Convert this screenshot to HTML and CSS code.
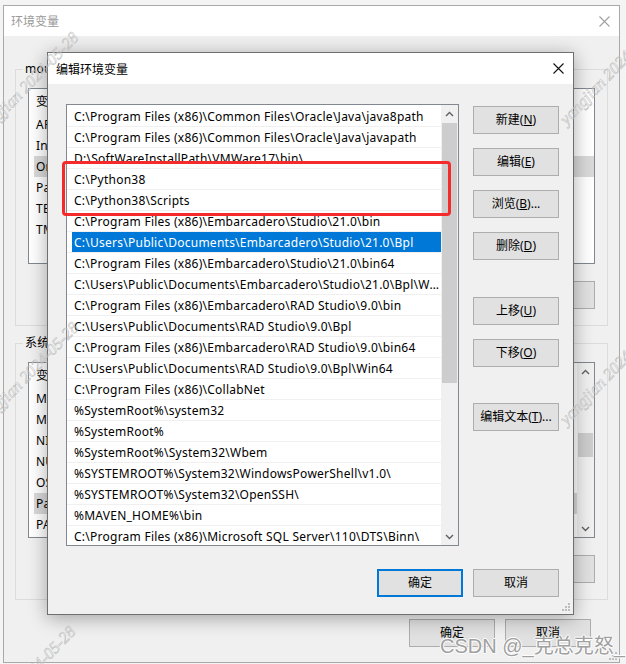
FILE: index.html
```html
<!DOCTYPE html>
<html lang="zh-CN">
<head>
<meta charset="utf-8">
<title>编辑环境变量</title>
<link rel="stylesheet" href="styles.css">
</head>
<body>
<div class="screen">
  <div class="envwin">
    <div class="win-title">
      <span class="win-title-text">环境变量</span>
      <svg class="close-icon close-grey" width="11" height="11" viewBox="0 0 11 11"><path d="M0.5 0.5 L10.5 10.5 M10.5 0.5 L0.5 10.5" /></svg>
    </div>
    <div class="win-body">
      <fieldset class="group">
        <legend>mou 的用户变量(U)</legend>
        <div class="vlist">
          <div class="vlist-rows">
            <div class="vhead"><span class="vcol-name">变量</span><span class="vcol-val">值</span></div>
            <div class="vrow">APPDATA_HOME</div>
            <div class="vrow">IntelliJ IDEA</div>
            <div class="vrow vrow-sel">OneDrive</div>
            <div class="vrow">Path</div>
            <div class="vrow">TEMP</div>
            <div class="vrow">TMP</div>
          </div>
        </div>
        <div class="group-btns">
          <button class="btn">新建(<u>N</u>)...</button>
          <button class="btn">编辑(<u>E</u>)...</button>
          <button class="btn">删除(<u>D</u>)</button>
        </div>
      </fieldset>
      <fieldset class="group group-second">
        <legend>系统变量(<u>S</u>)</legend>
        <div class="vlist">
          <div class="vlist-rows">
            <div class="vhead"><span class="vcol-name">变量</span><span class="vcol-val">值</span></div>
            <div class="vrow">MAVEN_HOME</div>
            <div class="vrow">MOZ_PLUGIN_PATH</div>
            <div class="vrow">NIDAQmxSwitchDir</div>
            <div class="vrow">NUMBER_OF_PROCESSORS</div>
            <div class="vrow">OS</div>
            <div class="vrow vrow-sel">Path</div>
            <div class="vrow">PATHEXT</div>
          </div>
          <div class="sbar">
            <div class="sbar-arrow"><svg width="9" height="6" viewBox="0 0 9 6"><path d="M1 5 L4.5 1.5 L8 5"/></svg></div>
            <div class="sbar-track"><div class="sbar-thumb bg-thumb"></div></div>
            <div class="sbar-arrow"><svg width="9" height="6" viewBox="0 0 9 6"><path d="M1 1 L4.5 4.5 L8 1"/></svg></div>
          </div>
        </div>
        <div class="group-btns">
          <button class="btn">新建(<u>W</u>)...</button>
          <button class="btn">编辑(<u>I</u>)...</button>
          <button class="btn">删除(<u>L</u>)</button>
        </div>
      </fieldset>
      <div class="win-footer">
        <button class="btn">确定</button>
        <button class="btn">取消</button>
      </div>
    </div>
    <svg class="grip grip-win" width="8" height="8" viewBox="0 0 8 8"><rect x="6" y="0" width="2" height="2"/><rect x="3" y="3" width="2" height="2"/><rect x="6" y="3" width="2" height="2"/><rect x="0" y="6" width="2" height="2"/><rect x="3" y="6" width="2" height="2"/><rect x="6" y="6" width="2" height="2"/></svg>
  </div>

  <div class="dialog">
    <div class="dlg-title">
      <span>编辑环境变量</span>
      <svg class="close-icon" width="11" height="11" viewBox="0 0 11 11"><path d="M0.5 0.5 L10.5 10.5 M10.5 0.5 L0.5 10.5" /></svg>
    </div>
    <div class="dlg-body">
      <div class="plist">
        <div class="plist-rows">
          <div class="prow">C:\Program Files (x86)\Common Files\Oracle\Java\java8path</div>
          <div class="prow">C:\Program Files (x86)\Common Files\Oracle\Java\javapath</div>
          <div class="prow">D:\SoftWareInstallPath\VMWare17\bin\</div>
          <div class="prow">C:\Python38</div>
          <div class="prow">C:\Python38\Scripts</div>
          <div class="prow">C:\Program Files (x86)\Embarcadero\Studio\21.0\bin</div>
          <div class="prow prow-sel">C:\Users\Public\Documents\Embarcadero\Studio\21.0\Bpl</div>
          <div class="prow">C:\Program Files (x86)\Embarcadero\Studio\21.0\bin64</div>
          <div class="prow">C:\Users\Public\Documents\Embarcadero\Studio\21.0\Bpl\Win64</div>
          <div class="prow">C:\Program Files (x86)\Embarcadero\RAD Studio\9.0\bin</div>
          <div class="prow">C:\Users\Public\Documents\RAD Studio\9.0\Bpl</div>
          <div class="prow">C:\Program Files (x86)\Embarcadero\RAD Studio\9.0\bin64</div>
          <div class="prow">C:\Users\Public\Documents\RAD Studio\9.0\Bpl\Win64</div>
          <div class="prow">C:\Program Files (x86)\CollabNet</div>
          <div class="prow">%SystemRoot%\system32</div>
          <div class="prow">%SystemRoot%</div>
          <div class="prow">%SystemRoot%\System32\Wbem</div>
          <div class="prow">%SYSTEMROOT%\System32\WindowsPowerShell\v1.0\</div>
          <div class="prow">%SYSTEMROOT%\System32\OpenSSH\</div>
          <div class="prow">%MAVEN_HOME%\bin</div>
          <div class="prow">C:\Program Files (x86)\Microsoft SQL Server\110\DTS\Binn\</div>
        </div>
        <div class="sbar">
          <div class="sbar-arrow"><svg width="9" height="6" viewBox="0 0 9 6"><path d="M1 5 L4.5 1.5 L8 5"/></svg></div>
          <div class="sbar-track"><div class="sbar-thumb dlg-thumb"></div></div>
          <div class="sbar-arrow"><svg width="9" height="6" viewBox="0 0 9 6"><path d="M1 1 L4.5 4.5 L8 1"/></svg></div>
        </div>
      </div>
      <div class="dlg-side">
        <button class="btn">新建(<u>N</u>)</button>
        <button class="btn">编辑(<u>E</u>)</button>
        <button class="btn">浏览(<u>B</u>)...</button>
        <button class="btn">删除(<u>D</u>)</button>
        <button class="btn btn-gap-a">上移(<u>U</u>)</button>
        <button class="btn">下移(<u>O</u>)</button>
        <button class="btn btn-gap-b">编辑文本(<u>T</u>)...</button>
      </div>
      <div class="dlg-footer">
        <button class="btn btn-default">确定</button>
        <button class="btn">取消</button>
      </div>
    </div>
    <svg class="grip grip-dlg" width="8" height="8" viewBox="0 0 8 8"><rect x="6" y="0" width="2" height="2"/><rect x="3" y="3" width="2" height="2"/><rect x="6" y="3" width="2" height="2"/><rect x="0" y="6" width="2" height="2"/><rect x="3" y="6" width="2" height="2"/><rect x="6" y="6" width="2" height="2"/></svg>
  </div>

  <div class="highlight-box"></div>

  <div class="wm wm-end wm-1">yangjian 2024-05-28</div>
  <div class="wm wm-start wm-2">yangjian 2024-05-28</div>
  <div class="wm wm-start wm-3">yangjian 2024-05-28</div>
  <div class="wm wm-end wm-4">yangjian 2024-05-28</div>
  <div class="wm wm-end wm-5">yangjian 2024-05-28</div>

  <div class="csdn-mark">CSDN @_克总克怒_</div>
</div>
</body>
</html>
```

FILE: styles.css
```css
* { box-sizing: border-box; }

body {
  margin: 0;
  background: #f4f4f4;
  font-family: "Noto Sans", "Noto Sans CJK SC", sans-serif;
  font-size: 12px;
  color: #000;
}

.screen {
  position: relative;
  width: 626px;
  height: 664px;
  overflow: hidden;
  padding: 5px 0 0 3px;
}

/* ---------- background window ---------- */
.envwin {
  position: relative;
  width: 617px;
  height: 658px;
  border: 1px solid #a9a9a9;
  background: #f0f0f0;
  display: flex;
  flex-direction: column;
}

.win-title {
  height: 30px;
  flex: none;
  background: #fff;
  display: flex;
  align-items: center;
  justify-content: space-between;
  padding: 0 9px 0 7px;
  color: #9a9a9a;
}

.close-icon path {
  stroke: #111;
  stroke-width: 1.1;
  fill: none;
}
.close-grey path { stroke: #a0a0a0; }

.win-body {
  flex: 1;
  display: flex;
  flex-direction: column;
  padding: 0 11px;
}

.group {
  margin: 25px 0 0;
  padding: 11px 12px 16px;
  border: 1px solid #dcdcdc;
  min-width: 0;
}
.group-second { margin-top: 9px; }

.group legend {
  height: 16px;
  line-height: 16px;
  padding: 0 2px;
  margin-left: -5px;
  letter-spacing: 0.2px;
}

.vlist {
  height: 176px;
  border: 1px solid #828790;
  background: #fff;
  display: flex;
}

.vlist-rows {
  flex: 1;
  min-width: 0;
}

.vhead {
  height: 25px;
  display: flex;
  align-items: center;
}
.vcol-name {
  width: 160px;
  padding-left: 7px;
  border-right: 1px solid #e5e5e5;
  height: 25px;
  line-height: 25px;
}
.vcol-val { padding-left: 7px; }

.vrow {
  height: 21px;
  line-height: 21px;
  padding-left: 7px;
  white-space: nowrap;
  letter-spacing: 0.25px;
}
.vrow-sel {
  background: linear-gradient(to right, transparent 5px, #d9d9d9 5px);
}

.group-btns {
  margin-top: 17px;
  display: flex;
  justify-content: flex-end;
  gap: 8px;
}

.win-footer {
  margin: 19px 17px 0 0;
  display: flex;
  justify-content: flex-end;
  gap: 10px;
}

/* ---------- buttons ---------- */
.btn {
  width: 86px;
  height: 28px;
  padding: 0;
  background: #e1e1e1;
  border: 1px solid #adadad;
  font: inherit;
  color: #000;
  line-height: 26px;
  text-align: center;
}
.btn u { text-underline-offset: 1px; }
.btn-default { border: 2px solid #0078d7; line-height: 24px; }

/* ---------- scrollbars ---------- */
.sbar {
  width: 17px;
  flex: none;
  background: #f0f0f0;
  display: flex;
  flex-direction: column;
}
.sbar-arrow {
  height: 17px;
  flex: none;
  display: flex;
  align-items: center;
  justify-content: center;
}
.sbar-arrow path {
  stroke: #606060;
  stroke-width: 1.4;
  fill: none;
}
.sbar-track {
  flex: 1;
  padding: 0 1px;
}
.sbar-thumb { background: #cdcdcd; }
.bg-thumb { margin-top: 53px; height: 24px; }
.dlg-thumb { margin-top: 1px; height: 260px; }

/* ---------- grips ---------- */
.grip rect { fill: #bdbdbd; }
.grip-win { position: absolute; right: 2px; bottom: 2px; }
.grip-dlg { position: absolute; right: 3px; bottom: 3px; }

/* ---------- foreground dialog ---------- */
.dialog {
  position: absolute;
  left: 47px;
  top: 52px;
  width: 527px;
  height: 563px;
  border: 1px solid #6f6f6f;
  background: #f0f0f0;
  box-shadow: 0 3px 18px rgba(0, 0, 0, 0.33);
  display: flex;
  flex-direction: column;
}

.dlg-title {
  height: 31px;
  flex: none;
  background: #fff;
  display: flex;
  align-items: center;
  justify-content: space-between;
  padding: 0 9px 0 8px;
}

.dlg-body {
  flex: 1;
  padding: 20px 14px 0 18px;
  display: grid;
  grid-template-columns: 393px 86px;
  column-gap: 14px;
  grid-template-rows: 442px auto;
  align-items: start;
}

.plist {
  height: 442px;
  border: 1px solid #828790;
  background: #fff;
  display: flex;
  overflow: hidden;
}

.plist-rows {
  flex: 1;
  min-width: 0;
  padding-top: 1px;
}

.prow {
  height: 21px;
  line-height: 22px;
  border-bottom: 1px solid #f0f0f0;
  padding: 0 0 0 7px;
  white-space: nowrap;
  overflow: hidden;
  text-overflow: ellipsis;
  letter-spacing: 0.25px;
}
.prow-sel {
  color: #fff;
  background: linear-gradient(to right, transparent 5px, #0078d7 5px);
}

.dlg-side {
  margin-top: 2px;
  display: flex;
  flex-direction: column;
  gap: 14px;
}
.dlg-side .btn-gap-a { margin-top: 23px; }
.dlg-side .btn-gap-b { margin-top: 22px; }

.dlg-footer {
  grid-column: 1 / 3;
  margin-top: 23px;
  display: flex;
  justify-content: flex-end;
  gap: 10px;
}

/* ---------- annotations / watermarks ---------- */
.highlight-box {
  position: absolute;
  left: 62px;
  top: 161px;
  width: 389px;
  height: 55px;
  border: 3px solid #f52a2a;
  border-radius: 4px;
}

.wm {
  position: absolute;
  font-family: "Liberation Serif", serif;
  font-style: italic;
  font-size: 16.5px;
  line-height: 18px;
  white-space: nowrap;
  color: transparent;
  -webkit-text-stroke: 0.5px #bdbdbd;
}
.wm-start { transform-origin: 0 50%; transform: rotate(-46deg); }
.wm-end { transform-origin: 100% 50%; transform: rotate(-46deg); }
.wm-1 { right: 550px; top: 26px; }
.wm-2 { left: 563px; top: 113px; }
.wm-3 { left: 563px; top: 413px; }
.wm-4 { right: 550px; top: 316px; }
.wm-5 { right: 553px; top: 620px; }

.csdn-mark {
  position: absolute;
  left: 440px;
  top: 634px;
  font-family: "Liberation Sans", "Noto Sans CJK SC", sans-serif;
  font-size: 20px;
  line-height: 24px;
  color: #a0a0a0;
  text-shadow: 1px 0 #fff, -1px 0 #fff, 0 1px #fff, 0 -1px #fff;
  white-space: nowrap;
}
```
